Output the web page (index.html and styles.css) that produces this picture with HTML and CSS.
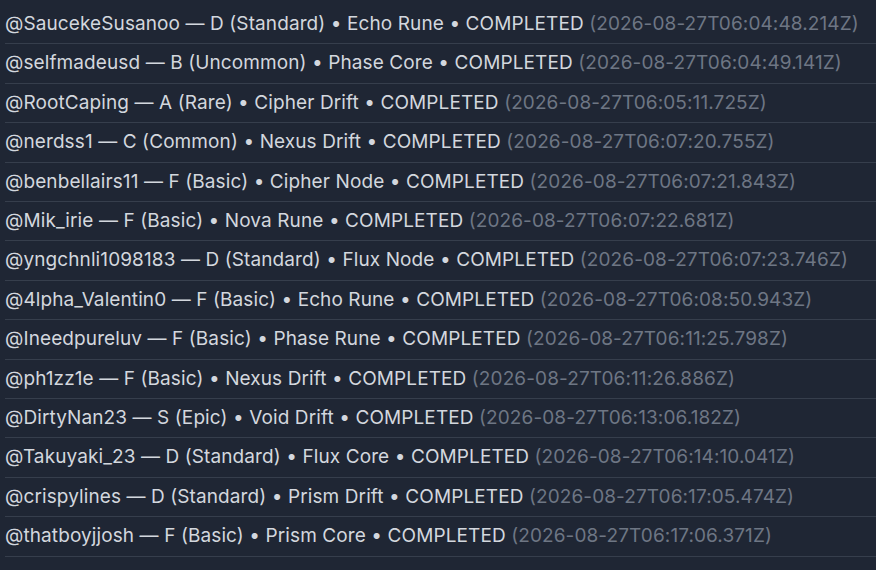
FILE: index.html
```html
<!DOCTYPE html>
<html>
<head>
<meta charset="utf-8">
<link rel="stylesheet" href="styles.css">
</head>
<body>
<ul class="log">
  <li class="row">@SaucekeSusanoo — D (Standard) • Echo Rune • COMPLETED <span class="ts">(2026-08-27T06:04:48.214Z)</span></li>
  <li class="row">@selfmadeusd — B (Uncommon) • Phase Core • COMPLETED <span class="ts">(2026-08-27T06:04:49.141Z)</span></li>
  <li class="row">@RootCaping — A (Rare) • Cipher Drift • COMPLETED <span class="ts">(2026-08-27T06:05:11.725Z)</span></li>
  <li class="row">@nerdss1 — C (Common) • Nexus Drift • COMPLETED <span class="ts">(2026-08-27T06:07:20.755Z)</span></li>
  <li class="row">@benbellairs11 — F (Basic) • Cipher Node • COMPLETED <span class="ts">(2026-08-27T06:07:21.843Z)</span></li>
  <li class="row">@Mik_irie — F (Basic) • Nova Rune • COMPLETED <span class="ts">(2026-08-27T06:07:22.681Z)</span></li>
  <li class="row">@yngchnli1098183 — D (Standard) • Flux Node • COMPLETED <span class="ts">(2026-08-27T06:07:23.746Z)</span></li>
  <li class="row">@4lpha_Valentin0 — F (Basic) • Echo Rune • COMPLETED <span class="ts">(2026-08-27T06:08:50.943Z)</span></li>
  <li class="row">@Ineedpureluv — F (Basic) • Phase Rune • COMPLETED <span class="ts">(2026-08-27T06:11:25.798Z)</span></li>
  <li class="row">@ph1zz1e — F (Basic) • Nexus Drift • COMPLETED <span class="ts">(2026-08-27T06:11:26.886Z)</span></li>
  <li class="row">@DirtyNan23 — S (Epic) • Void Drift • COMPLETED <span class="ts">(2026-08-27T06:13:06.182Z)</span></li>
  <li class="row">@Takuyaki_23 — D (Standard) • Flux Core • COMPLETED <span class="ts">(2026-08-27T06:14:10.041Z)</span></li>
  <li class="row">@crispylines — D (Standard) • Prism Drift • COMPLETED <span class="ts">(2026-08-27T06:17:05.474Z)</span></li>
  <li class="row">@thatboyjjosh — F (Basic) • Prism Core • COMPLETED <span class="ts">(2026-08-27T06:17:06.371Z)</span></li>
</ul>
</body>
</html>
```
FILE: styles.css
```css
html, body {
  margin: 0;
  padding: 0;
  background: #1f2634;
}
body {
  padding: 5px 0 0 5px;
  font-family: Inter, "Noto Sans", sans-serif;
  font-size: 19px;
  letter-spacing: 0.1px;
  color: #d3d7de;
}
.log {
  list-style: none;
  margin: 0;
  padding: 0;
}
.row {
  padding: 9px 0;
  line-height: 20.4px;
  border-bottom: 1px solid #363e4c;
  white-space: nowrap;
}
.ts {
  color: #6e7684;
}
```
